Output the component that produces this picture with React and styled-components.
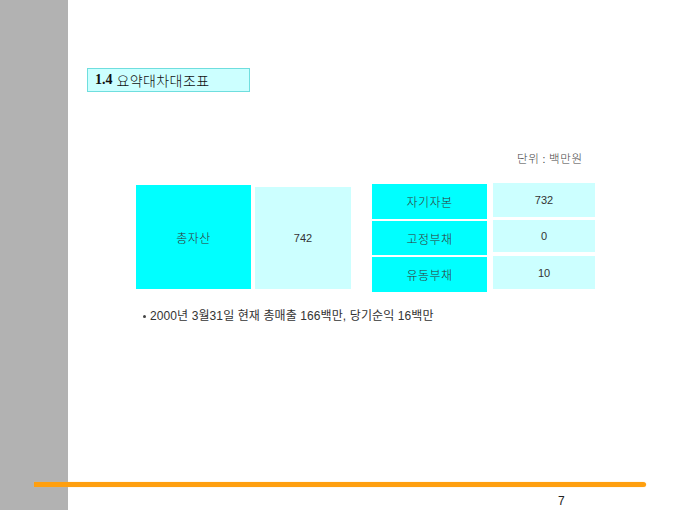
import React from 'react';
import styled, { createGlobalStyle } from 'styled-components';

const GlobalStyle = createGlobalStyle`
  html, body {
    margin: 0;
    padding: 0;
    background: #fff;
  }
`;

const Page = styled.div`
  width: 680px;
  height: 510px;
  box-sizing: border-box;
  display: flex;
  flex-direction: column;
  background: linear-gradient(to right, #b2b2b2 68px, #fff 68px);
  font-family: 'Liberation Sans', 'Noto Sans CJK KR', sans-serif;
  color: #333;
  overflow: hidden;
`;

const Title = styled.div`
  margin: 68px 0 0 87px;
  width: 163px;
  height: 24px;
  box-sizing: border-box;
  display: flex;
  align-items: center;
  padding-left: 7px;
  gap: 4px;
  background: #ccffff;
  border: 1px solid #6fdede;
  color: #111;
`;

const Num = styled.span`
  font-family: 'Liberation Serif', serif;
  font-weight: bold;
  font-size: 14px;
`;

const TitleText = styled.span`
  font-family: 'Noto Sans CJK KR', sans-serif;
  font-weight: 300;
  font-size: 14px;
  letter-spacing: 0.4px;
`;

const Unit = styled.div`
  align-self: flex-start;
  margin: 59px 0 0 517px;
  font-family: 'Noto Sans CJK KR', sans-serif;
  font-weight: 300;
  font-size: 11.5px;
  line-height: 14px;
  letter-spacing: 0.6px;
  color: #444;
`;

const Tables = styled.div`
  display: flex;
  align-items: flex-start;
  margin: 18px 0 0 136px;
  gap: 21px;
`;

const Group = styled.div`
  display: flex;
  align-items: flex-start;
  gap: ${p => p.gap}px;
`;

const Column = styled.div`
  display: flex;
  flex-direction: column;
  margin-top: ${p => p.top || 0}px;
  width: ${p => p.width}px;
`;

const Cell = styled.div`
  display: flex;
  align-items: center;
  justify-content: center;
  height: ${p => p.h}px;
  margin-top: ${p => p.gapTop || 0}px;
  background: ${p => (p.light ? '#ccffff' : '#00ffff')};
  font-family: ${p =>
    p.light ? "'Liberation Sans', sans-serif" : "'Noto Sans CJK KR', sans-serif"};
  font-weight: ${p => (p.light ? 400 : 300)};
  font-size: ${p => (p.light ? 11 : 12)}px;
  letter-spacing: ${p => (p.light ? 0 : 0.5)}px;
  color: #333;
`;

const Note = styled.div`
  margin: 17px 0 0 143px;
  font-family: 'Liberation Sans', 'Noto Sans CJK KR', sans-serif;
  font-size: 12px;
  line-height: 14px;
  letter-spacing: 0.1px;
  color: #333;
  display: flex;
  align-items: center;
  gap: 4px;
`;

const Dot = styled.span`
  width: 3px;
  height: 3px;
  border-radius: 50%;
  background: #444;
`;

const Spacer = styled.div`
  flex: 1;
`;

const Rule = styled.div`
  margin-left: 34px;
  width: 612px;
  height: 5px;
  background: #ff9f0f;
  border-radius: 0 3px 3px 0 / 0 2.5px 2.5px 0;
  box-shadow: 0 0 1px #ffc060;
`;

const PageNo = styled.div`
  margin: 7px 0 2px 558px;
  font-family: 'Liberation Sans', sans-serif;
  font-size: 12px;
  line-height: 14px;
  color: #222;
`;

const App = () => (
  <Page>
    <GlobalStyle />
    <Title>
      <Num>1.4</Num>
      <TitleText>요약대차대조표</TitleText>
    </Title>
    <Unit>단위 : 백만원</Unit>
    <Tables>
      <Group gap={4}>
        <Column width={115} top={2}>
          <Cell h={104}>총자산</Cell>
        </Column>
        <Column width={96} top={4}>
          <Cell light h={102}>742</Cell>
        </Column>
      </Group>
      <Group gap={6}>
        <Column width={115} top={1}>
          <Cell h={35}>자기자본</Cell>
          <Cell h={34} gapTop={2}>고정부채</Cell>
          <Cell h={35} gapTop={2}>유동부채</Cell>
        </Column>
        <Column width={102}>
          <Cell light h={34}>732</Cell>
          <Cell light h={32} gapTop={3}>0</Cell>
          <Cell light h={33} gapTop={4}>10</Cell>
        </Column>
      </Group>
    </Tables>
    <Note>
      <Dot />
      2000년 3월31일 현재 총매출 166백만, 당기순익 16백만
    </Note>
    <Spacer />
    <Rule />
    <PageNo>7</PageNo>
  </Page>
);

export default App;
